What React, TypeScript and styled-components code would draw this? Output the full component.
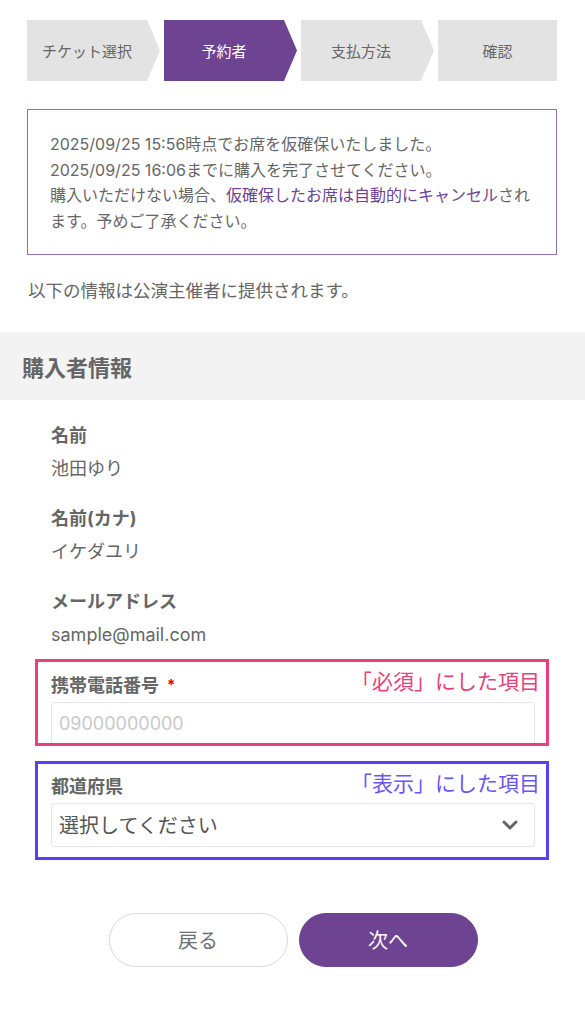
import React from "react";
import styled, { createGlobalStyle } from "styled-components";

const FONT = `Inter, "Noto Sans CJK JP", sans-serif`;

const GlobalStyle = createGlobalStyle`
  html, body { margin: 0; padding: 0; background: #fff; }
  body {
    font-family: ${FONT};
    color: #666;
    -webkit-font-smoothing: antialiased;
  }
  * { box-sizing: border-box; }
`;

const Page = styled.div`
  width: 585px;
  padding-top: 20px;
  padding-bottom: 56px;
`;

const Steps = styled.ol`
  list-style: none;
  margin: 0 28px 0 27px;
  padding: 0;
  display: flex;
  gap: 4px;
  height: 61px;
`;

const Step = styled.li<{ $active?: boolean; $last?: boolean }>`
  width: ${(p) => (p.$last ? "119px" : "133px")};
  flex: 0 0 auto;
  display: flex;
  align-items: center;
  justify-content: center;
  padding-right: ${(p) => (p.$last ? "0" : "13px")};
  background: ${(p) => (p.$active ? "#6e4391" : "#e3e3e3")};
  color: ${(p) => (p.$active ? "#fff" : "#666")};
  font-family: "Noto Sans CJK JP", sans-serif;
  font-size: 15px;
  clip-path: ${(p) =>
    p.$last
      ? "none"
      : "polygon(0 0, calc(100% - 13px) 0, 100% 50%, calc(100% - 13px) 100%, 0 100%)"};
`;

const Notice = styled.div`
  margin: 28px 28px 0 27px;
  border: 1.5px solid #8f6db6;
  padding: 22px 20px 19px 22px;
  font-size: 16px;
  line-height: 25.7px;
  color: #666;
`;

const Accent = styled.span`
  color: #6e4391;
`;

const Lead = styled.p`
  margin: 22px 0 0 28px;
  font-size: 17.5px;
  line-height: 28px;
  color: #666;
`;

const SectionBand = styled.h2`
  margin: 27px 0 0;
  height: 68px;
  background: #f3f3f3;
  display: flex;
  align-items: center;
  padding-left: 22px;
  font-size: 22px;
  font-weight: 700;
  color: #666;
`;

const Form = styled.div`
  padding: 22px 50px 0 51px;
  display: flex;
  flex-direction: column;
`;

const Item = styled.div`
  display: flex;
  flex-direction: column;
  gap: 5px;
  margin-bottom: 22px;
`;

const Label = styled.div`
  font-size: 18px;
  font-weight: 700;
  line-height: 28px;
  color: #666;
`;

const Required = styled.span`
  color: #e60012;
  font-size: 15px;
  margin-left: 8px;
  vertical-align: 2px;
`;

const Value = styled.div`
  font-size: 18px;
  line-height: 28px;
  color: #666;
`;

const FieldGroup = styled.div<{ $gapAfter: number }>`
  position: relative;
  display: flex;
  flex-direction: column;
  gap: 2px;
  margin-bottom: ${(p) => p.$gapAfter}px;
`;

const Frame = styled.div<{ $color: string; $bottom: number }>`
  position: absolute;
  top: -12px;
  left: -16px;
  right: -14px;
  bottom: ${(p) => p.$bottom}px;
  border: 3px solid ${(p) => p.$color};
  pointer-events: none;
`;

const Annotation = styled.span<{ $color: string }>`
  position: absolute;
  top: 4px;
  right: 6px;
  font-size: 21px;
  line-height: 28px;
  color: ${(p) => p.$color};
  font-family: "Noto Sans CJK JP", sans-serif;
  font-weight: 400;
`;

const TextInput = styled.input`
  height: 44px;
  width: 100%;
  border: 1px solid #e6e6e6;
  border-radius: 3px;
  padding: 0 7px;
  font-family: ${FONT};
  font-size: 18px;
  color: #555;
  background: #fff;
  outline: none;
  &::placeholder { color: #c9c9c9; }
`;

const SelectBox = styled.div`
  height: 44px;
  border: 1px solid #e6e6e6;
  border-radius: 3px;
  padding: 0 16px 0 7px;
  display: flex;
  align-items: center;
  justify-content: space-between;
  font-size: 20px;
  color: #555;
`;

const Buttons = styled.div`
  display: flex;
  justify-content: center;
  gap: 11px;
`;

const PillButton = styled.button<{ $primary?: boolean }>`
  width: 179px;
  height: 54px;
  border-radius: 27px;
  border: 1.5px solid ${(p) => (p.$primary ? "#6e4391" : "#d6d9de")};
  background: ${(p) => (p.$primary ? "#6e4391" : "#fff")};
  color: ${(p) => (p.$primary ? "#fff" : "#6b7079")};
  font-family: "Noto Sans CJK JP", sans-serif;
  font-size: 20px;
  cursor: pointer;
`;

const Chevron = () => (
  <svg width="16" height="10" viewBox="0 0 16 10" aria-hidden="true">
    <path d="M2 2 L8 8 L14 2" fill="none" stroke="#5f6670" strokeWidth="3" strokeLinecap="round" strokeLinejoin="round" />
  </svg>
);

const steps = ["チケット選択", "予約者", "支払方法", "確認"];

export default function App() {
  return (
    <>
      <GlobalStyle />
      <Page>
        <Steps>
          {steps.map((s, i) => (
            <Step key={s} $active={i === 1} $last={i === steps.length - 1}>
              {s}
            </Step>
          ))}
        </Steps>

        <Notice>
          2025/09/25 15:56時点でお席を仮確保いたしました。
          <br />
          2025/09/25 16:06までに購入を完了させてください。
          <br />
          購入いただけない場合、<Accent>仮確保したお席は自動的にキャンセル</Accent>されます。予めご了承ください。
        </Notice>

        <Lead>以下の情報は公演主催者に提供されます。</Lead>

        <SectionBand>購入者情報</SectionBand>

        <Form>
          <Item>
            <Label>名前</Label>
            <Value>池田ゆり</Value>
          </Item>
          <Item>
            <Label>名前(カナ)</Label>
            <Value>イケダユリ</Value>
          </Item>
          <Item>
            <Label>メールアドレス</Label>
            <Value>sample@mail.com</Value>
          </Item>

          <FieldGroup $gapAfter={27}>
            <Label>
              携帯電話番号<Required>*</Required>
            </Label>
            <TextInput placeholder="09000000000" />
            <Frame $color="#e8417a" $bottom={0}>
              <Annotation $color="#e8417a">「必須」にした項目</Annotation>
            </Frame>
          </FieldGroup>

          <FieldGroup $gapAfter={66}>
            <Label>都道府県</Label>
            <SelectBox>
              <span>選択してください</span>
              <Chevron />
            </SelectBox>
            <Frame $color="#5b3ff2" $bottom={-13}>
              <Annotation $color="#6b55f2">「表示」にした項目</Annotation>
            </Frame>
          </FieldGroup>

          <Buttons>
            <PillButton>戻る</PillButton>
            <PillButton $primary>次へ</PillButton>
          </Buttons>
        </Form>
      </Page>
    </>
  );
}
